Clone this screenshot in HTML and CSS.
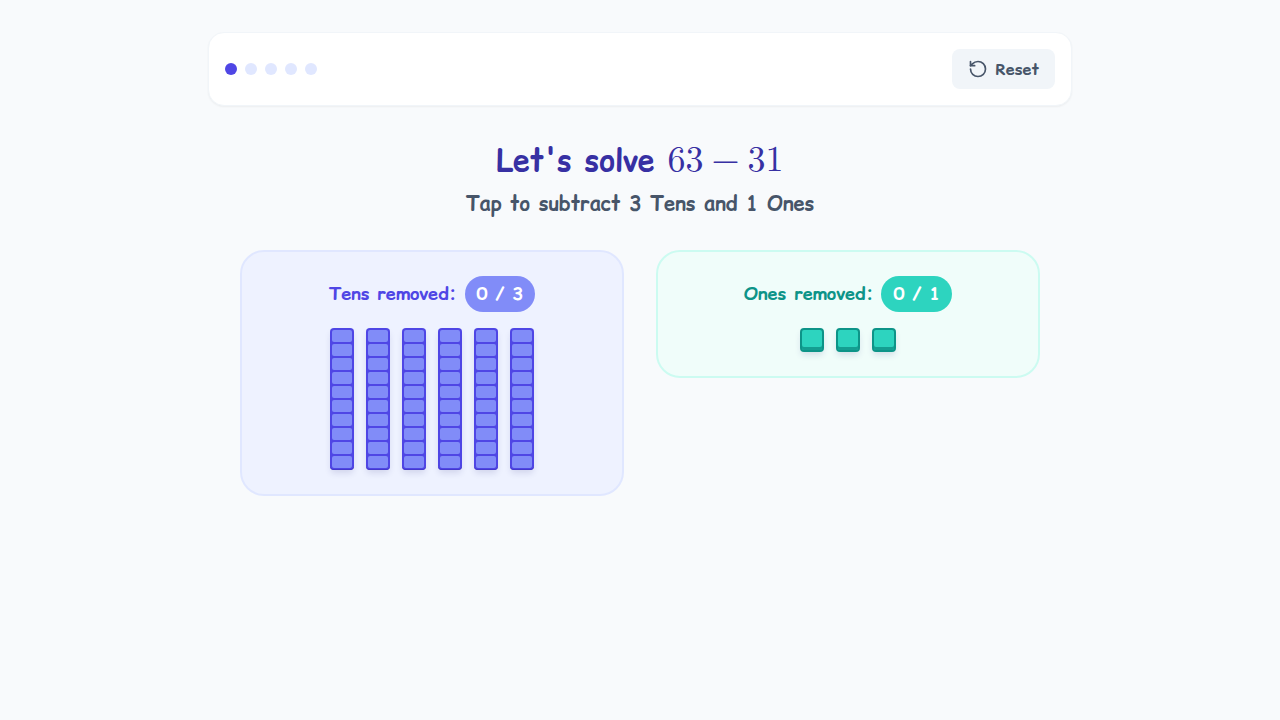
FILE: index.html
```
<!DOCTYPE html>
<html lang="en">
<head>
    <meta charset="UTF-8">
    <meta name="viewport" content="width=device-width, initial-scale=1.0">
    <title>Subtraction with Tens and Ones</title>
    <link rel="stylesheet" href="styles.css">
</head>
<body>
    <div class="app">
        <header class="toolbar">
            <div class="steps">
                <span class="step active"></span>
                <span class="step"></span>
                <span class="step"></span>
                <span class="step"></span>
                <span class="step"></span>
            </div>
            <button class="reset-btn" id="reset" type="button">
                <svg width="20" height="20" viewBox="0 0 24 24" fill="none" stroke="currentColor" stroke-width="2" stroke-linecap="round" stroke-linejoin="round" aria-hidden="true">
                    <path d="M3 12a9 9 0 1 0 9-9 9.75 9.75 0 0 0-6.74 2.74L3 8"/>
                    <path d="M3 3v5h5"/>
                </svg>
                Reset
            </button>
        </header>

        <main>
            <h1 class="title">Let's solve <span class="math">63<span class="op">−</span>31</span></h1>
            <p class="hint">Tap to subtract 3 Tens and 1 Ones</p>

            <div class="panels">
                <section class="panel tens">
                    <h2 class="panel-title">Tens removed: <span class="count">0 / 3</span></h2>
                    <div class="blocks" data-limit="3"></div>
                </section>
                <section class="panel ones">
                    <h2 class="panel-title">Ones removed: <span class="count">0 / 1</span></h2>
                    <div class="blocks" data-limit="1"></div>
                </section>
            </div>
        </main>
    </div>

    <script src="script.js"></script>
</body>
</html>
```
FILE: styles.css
```
* {
    margin: 0;
    padding: 0;
    box-sizing: border-box;
}

body {
    min-height: 100vh;
    background: #f8fafc;
    color: #475569;
    font-family: "Comic Relief", "Comic Neue", "Open Sans", sans-serif;
}

button {
    font: inherit;
    border: none;
    cursor: pointer;
}

.app {
    max-width: 928px;
    margin: 0 auto;
    padding: 32px;
}

/* Top bar */
.toolbar {
    display: flex;
    justify-content: space-between;
    align-items: center;
    padding: 16px;
    background: #fff;
    border: 1px solid #f1f5f9;
    border-radius: 16px;
    box-shadow: 0 1px 2px rgba(0, 0, 0, 0.05);
}

.steps {
    display: flex;
    gap: 8px;
}

.step {
    width: 12px;
    height: 12px;
    border-radius: 50%;
    background: #e0e7ff;
}

.step.active {
    background: #4f46e5;
}

.reset-btn {
    display: flex;
    align-items: center;
    gap: 8px;
    padding: 8px 16px;
    border-radius: 8px;
    background: #f1f5f9;
    color: #475569;
    font-size: 16px;
    line-height: 24px;
    font-weight: 700;
}

/* Question */
main {
    padding: 32px;
    text-align: center;
}

.title {
    color: #3730a3;
    font-size: 30px;
    line-height: 44px;
    font-weight: 700;
}

.math {
    font-family: "Latin Modern Math", "Liberation Serif", serif;
    font-size: 36px;
    line-height: 36px;
    font-weight: 400;
}

.op {
    margin: 0 8px;
}

.hint {
    margin-top: 8px;
    font-size: 20px;
    line-height: 28px;
    font-weight: 700;
}

/* Panels */
.panels {
    display: grid;
    grid-template-columns: 1fr 1fr;
    gap: 32px;
    align-items: start;
    margin-top: 32px;
}

.panel {
    padding: 24px;
    border: 2px solid;
    border-radius: 24px;
}

.panel-title {
    display: flex;
    justify-content: center;
    align-items: center;
    gap: 8px;
    margin-bottom: 16px;
    font-size: 18px;
    line-height: 28px;
    font-weight: 700;
}

.count {
    padding: 4px 12px;
    border-radius: 18px;
    color: #fff;
}

.tens {
    background: #eef2ff;
    border-color: #e0e7ff;
    color: #4f46e5;
}

.tens .count {
    background: #818cf8;
}

.ones {
    background: #f0fdfa;
    border-color: #ccfbf1;
    color: #0d9488;
}

.ones .count {
    background: #2dd4bf;
}

.blocks {
    display: flex;
    flex-wrap: wrap;
    justify-content: center;
    gap: 12px;
}

.rod {
    display: flex;
    flex-direction: column;
    gap: 2px;
    width: 24px;
    padding: 2px;
    border-radius: 4px;
    background: #4f46e5;
    box-shadow: 0 4px 6px -1px rgba(49, 46, 129, 0.15), inset 0 -1px 0 #4338ca;
}

.rod span {
    height: 12px;
    border-radius: 2px;
    background: #818cf8;
}

.cube {
    width: 24px;
    height: 24px;
    border: 2px solid #0d9488;
    border-radius: 4px;
    background: #2dd4bf;
    box-shadow: 0 4px 6px -1px rgba(49, 46, 129, 0.15), inset 0 -3px 0 #149e91;
}

.removed {
    opacity: 0.2;
}
```
FILE: script.js
```
const tens = document.querySelector('.tens');
const ones = document.querySelector('.ones');

function updateCount(panel) {
    const limit = panel.querySelector('.blocks').dataset.limit;
    const removed = panel.querySelectorAll('.removed').length;
    panel.querySelector('.count').textContent = `${removed} / ${limit}`;
}

function fill(panel, amount, className, label) {
    const blocks = panel.querySelector('.blocks');
    blocks.innerHTML = '';
    for (let i = 0; i < amount; i++) {
        const block = document.createElement('button');
        block.type = 'button';
        block.className = className;
        block.setAttribute('aria-label', label);
        if (className === 'rod') {
            block.innerHTML = '<span></span>'.repeat(10);
        }
        block.addEventListener('click', () => {
            const removed = panel.querySelectorAll('.removed').length;
            if (removed < Number(blocks.dataset.limit)) {
                block.classList.add('removed');
                updateCount(panel);
            }
        });
        blocks.appendChild(block);
    }
    updateCount(panel);
}

function reset() {
    fill(tens, 6, 'rod', 'Remove one ten');
    fill(ones, 3, 'cube', 'Remove one');
}

document.getElementById('reset').addEventListener('click', reset);
reset();
```
